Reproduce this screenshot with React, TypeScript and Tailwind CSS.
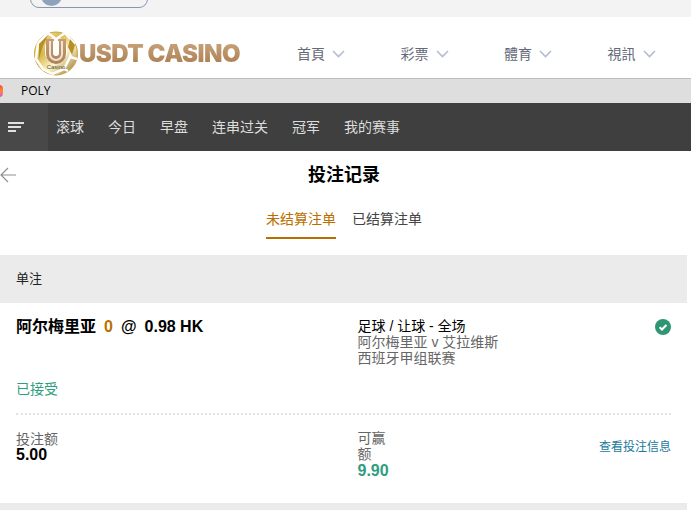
import React from 'react';

const font = { fontFamily: '"Liberation Sans", "Noto Sans CJK SC", sans-serif' };

const headerLinks = ['首頁', '彩票', '體育', '視訊'];
const sportLinks = ['滚球', '今日', '早盘', '连串过关', '冠军', '我的赛事'];

const Logo = () => (
  <svg width="44" height="45" viewBox="0 0 44 45" className="shrink-0">
    <defs>
      <linearGradient id="gold" x1="0" y1="0" x2="1" y2="1">
        <stop offset="0" stopColor="#fff7d0" />
        <stop offset="0.35" stopColor="#d8b84a" />
        <stop offset="0.6" stopColor="#fdf6cf" />
        <stop offset="1" stopColor="#8a6414" />
      </linearGradient>
      <linearGradient id="badge" x1="0" y1="0" x2="0" y2="1">
        <stop offset="0" stopColor="#c99d72" />
        <stop offset="1" stopColor="#ad8257" />
      </linearGradient>
    </defs>
    <circle cx="22" cy="22.5" r="21.5" fill="url(#gold)" stroke="#c7a53f" strokeWidth="1" />
    <path d="M14 2 L22 8 L31 2 M31 2 L40 12 L36 26 L43 28 M4 12 L14 2 M4 12 L2 28 L9 38 L18 43 M36 26 L30 38 L34 40 M30 38 L18 43" fill="none" stroke="#fff" strokeWidth="2.5" />
    <path d="M5 13 L14 4 L9 15 L5 28 Z M36 8 L41 14 L38 24 L34 16 Z" fill="#b88f22" />
    <rect x="11" y="7" width="22" height="24" rx="9" fill="#fff" />
    <path d="M12 8 h8 v2 h-1 v12 a3 3 0 0 0 6 0 v-12 h-1 v-2 h8 v15 a10 10 0 0 1 -20 0 Z" fill="url(#badge)" />
    <path d="M15 10 h2 v13 a5 5 0 0 0 10 0 v-13 h2 v13 a7 7 0 0 1 -14 0 Z" fill="#fff" opacity="0.75" />
    <text x="22" y="38" textAnchor="middle" fontSize="6" fill="#5b4a2a" fontFamily="Liberation Sans">Casino</text>
  </svg>
);

const Chevron = () => (
  <svg width="13" height="8" viewBox="0 0 13 8" fill="none" stroke="#b4bcd2" strokeWidth="1.6" className="ml-[7px]">
    <path d="M1 1 L6.5 6.5 L12 1" />
  </svg>
);

export default function App() {
  return (
    <div className="w-[691px] h-[510px] overflow-hidden bg-white" style={font}>
      {/* site chrome */}
      <div className="h-[17px] bg-[#f3f3f3] pl-[30px] overflow-hidden">
        <div className="w-[118px] h-[26px] -mt-[18px] border border-[#8497b8] rounded-[9px] pl-[10px] pt-[2px]">
          <div className="w-[21px] h-[21px] rounded-full bg-[#8fa1bb]" />
        </div>
      </div>
      <div className="h-[61px] flex items-center pl-[34px] pt-[12px] bg-white">
        <Logo />
        <span className="ml-[1px] w-[190px] text-[24px] leading-none font-black tracking-[-0.5px] bg-gradient-to-b from-[#c9a27c] to-[#a97e4f] bg-clip-text text-transparent" style={{ fontFamily: 'Inter, sans-serif' }}>
          USDT CASINO
        </span>
        <div className="ml-[28px] flex gap-[41px]">
          {headerLinks.map((link) => (
            <div key={link} className="flex items-center w-[62.5px] text-sm text-[#656878]">
              {link}
              <Chevron />
            </div>
          ))}
        </div>
      </div>
      <div className="h-[25px] border-t border-[#bcbcbc] bg-[#dedede] flex items-center overflow-hidden">
        <div className="w-[8px] h-[12px] -ml-[5px] rounded-full bg-gradient-to-b from-[#ff3c3c] via-[#ff8a1e] to-[#d840d0]" />
        <span className="ml-[18px] text-xs text-black" style={{ fontFamily: '"Open Sans", sans-serif' }}>POLY</span>
      </div>
      <div className="h-[48px] bg-[#3f3f3f] flex items-center">
        <div className="w-[48px] h-full bg-[#484848] flex flex-col justify-center gap-[2px] pl-[8px]">
          <div className="w-[16px] h-[2px] bg-[#e0e0e0]" />
          <div className="w-[13px] h-[2px] bg-[#e0e0e0]" />
          <div className="w-[8px] h-[2px] bg-[#e0e0e0]" />
        </div>
        <div className="flex gap-[24px] ml-[8px] text-sm text-[#dddddd]">
          {sportLinks.map((link) => (
            <span key={link}>{link}</span>
          ))}
        </div>
      </div>

      {/* bet history */}
      <div className="w-[687px]">
        <div className="h-[48px] relative flex items-center justify-center">
          <svg width="17" height="16" viewBox="0 0 17 16" fill="none" stroke="#8f8f8f" strokeWidth="1.2" className="absolute left-0 top-[16px]">
            <path d="M16 8 H1 M8 1 L1 8 L8 15" />
          </svg>
          <h1 className="text-lg font-bold text-black ml-[1px]">投注记录</h1>
        </div>
        <div className="h-[40px] flex justify-center gap-4 text-sm ml-[1px]">
          <div className="w-[70px] h-full border-b-2 border-[#b96f00] text-[#b96f00] pt-[10px]">未结算注单</div>
          <div className="w-[70px] h-full text-[#444444] pt-[10px]">已结算注单</div>
        </div>
        <div className="mt-[16px] h-[48px] bg-[#ebebeb] flex items-center pl-4 text-[13px] text-[#222222]">单注</div>

        <div className="h-[200px] px-4 pt-[14px] flex flex-col">
          <div className="h-[58px] flex">
            <div className="w-[341.5px] flex items-start text-base font-bold text-black leading-[20px] whitespace-pre">
              <span>阿尔梅里亚</span>
              <span className="ml-[8px] text-[#b96f00]">0</span>
              <span className="ml-[8px]">@</span>
              <span className="ml-[8px]">0.98 HK</span>
            </div>
            <div className="flex-1 text-sm leading-[16px] pt-[1px] text-[#666666]">
              <div className="text-black">足球 / 让球 - 全场</div>
              <div>阿尔梅里亚 v 艾拉维斯</div>
              <div>西班牙甲组联赛</div>
            </div>
            <svg width="16" height="16" viewBox="0 0 16 16" className="mt-[2px]">
              <circle cx="8" cy="8" r="8" fill="#2f9673" />
              <path d="M4.6 8.2 L7 10.5 L11.4 6" fill="none" stroke="#fff" strokeWidth="2" />
            </svg>
          </div>
          <div className="mt-[6px] text-sm leading-[16px] text-[#2f9d80]">已接受</div>
          <div className="mt-[16px] border-t-2 border-dotted border-[#e2e2e2]" />
          <div className="mt-[16px] flex">
            <div className="w-[341.5px] text-sm leading-[16px] text-[#666666]">
              投注额
              <div className="text-base leading-[16px] font-bold text-black">5.00</div>
            </div>
            <div className="flex-1 -mt-[1px] text-sm leading-[16px] text-[#666666]">
              <div className="w-[28px]">可赢额</div>
              <div className="mt-[1px] text-base leading-[16px] font-bold text-[#2f9d80]">9.90</div>
            </div>
            <a className="mt-[8px] text-xs leading-[16px] text-[#1b7a9c]">查看投注信息</a>
          </div>
        </div>
        <div className="h-[7px] bg-[#ebebeb]" />
      </div>
    </div>
  );
}
